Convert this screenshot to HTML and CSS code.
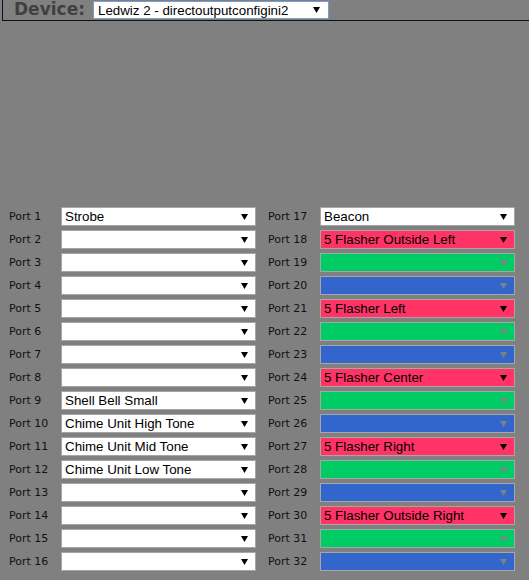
FILE: index.html
```html
<!DOCTYPE html>
<html>
<head>
<meta charset="utf-8">
<link rel="stylesheet" href="styles.css">
</head>
<body>
<div class="header">
  <span class="device-label">Device:</span>
  <select class="device-select"><option>Ledwiz 2 - directoutputconfigini2</option></select>
</div>
<div class="ports">
  <div class="col">
    <label class="lbl">Port 1</label><select class="sel"><option>Strobe</option></select>
    <label class="lbl">Port 2</label><select class="sel"><option></option></select>
    <label class="lbl">Port 3</label><select class="sel"><option></option></select>
    <label class="lbl">Port 4</label><select class="sel"><option></option></select>
    <label class="lbl">Port 5</label><select class="sel"><option></option></select>
    <label class="lbl">Port 6</label><select class="sel"><option></option></select>
    <label class="lbl">Port 7</label><select class="sel"><option></option></select>
    <label class="lbl">Port 8</label><select class="sel"><option></option></select>
    <label class="lbl">Port 9</label><select class="sel"><option>Shell Bell Small</option></select>
    <label class="lbl">Port 10</label><select class="sel"><option>Chime Unit High Tone</option></select>
    <label class="lbl">Port 11</label><select class="sel"><option>Chime Unit Mid Tone</option></select>
    <label class="lbl">Port 12</label><select class="sel"><option>Chime Unit Low Tone</option></select>
    <label class="lbl">Port 13</label><select class="sel"><option></option></select>
    <label class="lbl">Port 14</label><select class="sel"><option></option></select>
    <label class="lbl">Port 15</label><select class="sel"><option></option></select>
    <label class="lbl">Port 16</label><select class="sel"><option></option></select>
  </div>
  <div class="col">
    <label class="lbl">Port 17</label><select class="sel"><option>Beacon</option></select>
    <label class="lbl">Port 18</label><select class="sel red"><option>5 Flasher Outside Left</option></select>
    <label class="lbl">Port 19</label><select class="sel green"><option></option></select>
    <label class="lbl">Port 20</label><select class="sel blue"><option></option></select>
    <label class="lbl">Port 21</label><select class="sel red"><option>5 Flasher Left</option></select>
    <label class="lbl">Port 22</label><select class="sel green"><option></option></select>
    <label class="lbl">Port 23</label><select class="sel blue"><option></option></select>
    <label class="lbl">Port 24</label><select class="sel red"><option>5 Flasher Center</option></select>
    <label class="lbl">Port 25</label><select class="sel green"><option></option></select>
    <label class="lbl">Port 26</label><select class="sel blue"><option></option></select>
    <label class="lbl">Port 27</label><select class="sel red"><option>5 Flasher Right</option></select>
    <label class="lbl">Port 28</label><select class="sel green"><option></option></select>
    <label class="lbl">Port 29</label><select class="sel blue"><option></option></select>
    <label class="lbl">Port 30</label><select class="sel red"><option>5 Flasher Outside Right</option></select>
    <label class="lbl">Port 31</label><select class="sel green"><option></option></select>
    <label class="lbl">Port 32</label><select class="sel blue"><option></option></select>
  </div>
</div>
</body>
</html>
```
FILE: styles.css
```css
html, body {
  margin: 0;
  padding: 0;
  background: #808080;
}
body {
  font-family: "DejaVu Sans", Verdana, sans-serif;
  width: 529px;
  height: 580px;
  overflow: hidden;
}
.header {
  margin-left: 2px;
  height: 20px;
  border-left: 1px solid #111;
  border-bottom: 1px solid #111;
  display: flex;
  align-items: flex-start;
  padding-left: 11px;
}
.device-label {
  font-weight: bold;
  font-size: 17px;
  line-height: 19px;
  color: #404040;
  margin-right: 8px;
}
.device-select {
  -webkit-appearance: none;
  appearance: none;
  margin: 1px 0 0 0;
  width: 236px;
  height: 18px;
  border: 1px solid #7a9bd0;
  background: #fff url("data:image/svg+xml;utf8,<svg xmlns='http://www.w3.org/2000/svg' width='7' height='6'><path d='M0 0h7L3.5 6z' fill='%23000'/></svg>") no-repeat right 8px center;
  font-family: "Liberation Sans", Arial, sans-serif;
  font-size: 13.333px;
  padding: 0 0 0 4px;
  color: #000;
  border-radius: 0;
}
.ports {
  display: flex;
  gap: 12px;
  padding: 186px 0 0 9px;
}
.col {
  display: grid;
  grid-template-columns: 52px 195px;
  row-gap: 4px;
  align-items: center;
}
.lbl {
  font-size: 11px;
  color: #111;
  line-height: 19px;
}
.sel {
  -webkit-appearance: none;
  appearance: none;
  margin: 0;
  height: 19px;
  width: 195px;
  border: 1px solid #a6a6a6;
  border-radius: 0;
  background: #fff url("data:image/svg+xml;utf8,<svg xmlns='http://www.w3.org/2000/svg' width='7' height='6'><path d='M0 0h7L3.5 6z' fill='%23000'/></svg>") no-repeat right 7px center;
  font-family: "Liberation Sans", Arial, sans-serif;
  font-size: 13.333px;
  color: #000;
  padding: 0 0 0 3px;
}
.sel.red {
  background-color: #ff3366;
}
.sel.green {
  background-color: #00cc66;
  background-image: url("data:image/svg+xml;utf8,<svg xmlns='http://www.w3.org/2000/svg' width='7' height='6'><path d='M0 0h7L3.5 6z' fill='%23808080'/></svg>");
}
.sel.blue {
  background-color: #3366cc;
  background-image: url("data:image/svg+xml;utf8,<svg xmlns='http://www.w3.org/2000/svg' width='7' height='6'><path d='M0 0h7L3.5 6z' fill='%23808080'/></svg>");
}
```
